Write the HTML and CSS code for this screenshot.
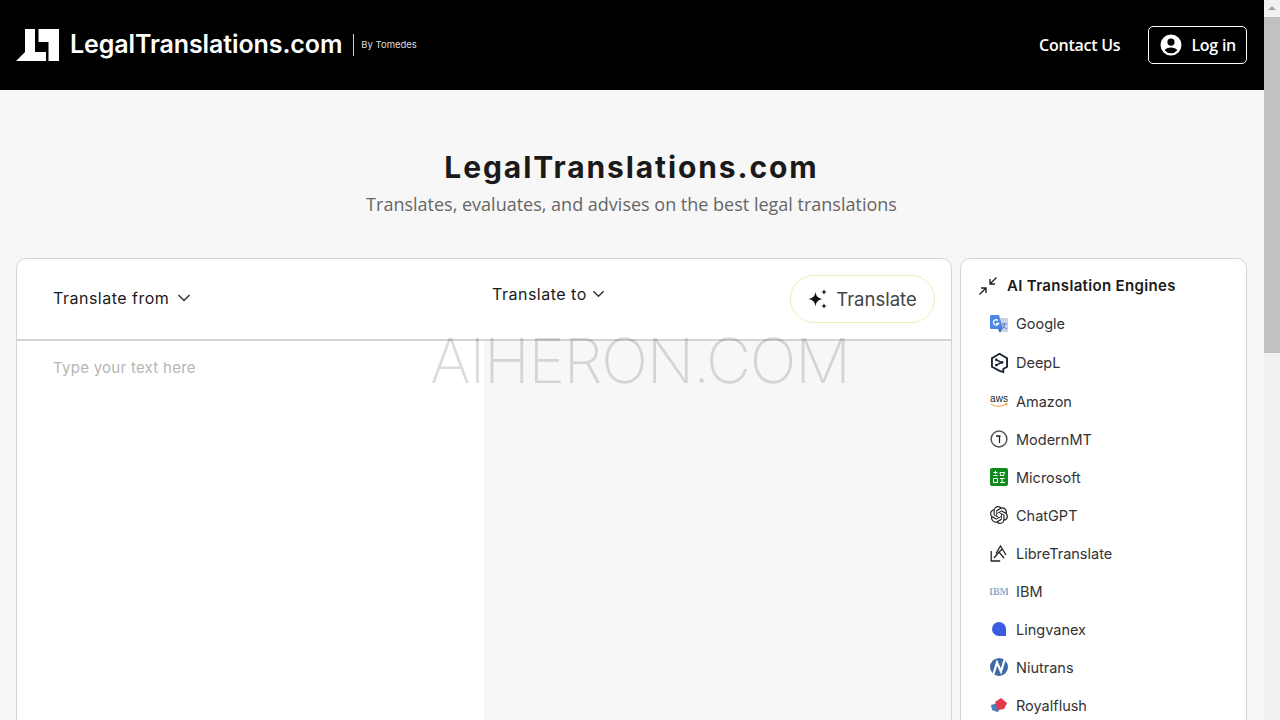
FILE: index.html
```html
<!DOCTYPE html>
<html lang="en">
<head>
    <meta charset="UTF-8">
    <title>LegalTranslations.com</title>
    <link rel="stylesheet" href="styles.css">
</head>
<body>
    <div class="page">
        <header class="topbar">
            <a class="brand">
                <svg class="brand-mark" viewBox="0 0 43 32" width="43" height="32">
                    <path d="M9 0h10v23h11v9H0l9-9z" fill="#fff"/>
                    <path d="M22.500 0H43v32H32.500V13h-10z" fill="#fff"/>
                </svg>
                <span class="brand-name">LegalTranslations.com</span>
                <span class="brand-by">By Tomedes</span>
            </a>
            <nav class="topnav">
                <a class="contact">Contact Us</a>
                <a class="login">
                    <svg viewBox="0 0 24 24" width="24" height="24">
                        <path fill="#fff" d="M12 1.500a10.500 10.500 0 1 0 0 21 10.500 10.500 0 0 0 0-21zm0 4a3.600 3.600 0 1 1 0 7.200 3.600 3.600 0 0 1 0-7.200zm0 14.800a8.300 8.300 0 0 1-6.400-3c.9-1.700 3.800-2.900 6.400-2.900s5.500 1.200 6.400 2.900a8.300 8.300 0 0 1-6.400 3z"/>
                    </svg>
                    Log in
                </a>
            </nav>
        </header>

        <main class="content">
            <div class="hero">
                <h1>LegalTranslations.com</h1>
                <p>Translates, evaluates, and advises on the best legal translations</p>
            </div>

            <div class="workspace">
                <section class="translator">
                    <div class="toolbar">
                        <div class="from">Translate from <svg class="chev" viewBox="0 0 14 8" width="14" height="8"><path d="M1.500 1l5.500 5.500L12.500 1"/></svg></div>
                        <div class="to">Translate to <svg class="chev" viewBox="0 0 14 8" width="13" height="8"><path d="M1.500 1l5.500 5.500L12.500 1"/></svg></div>
                        <button class="translate-btn">
                            <svg viewBox="0 0 20 20" width="20" height="20">
                                <path fill="#111" d="M7.500 3c.8 4.500 2.500 6.200 7.500 7-5 .8-6.700 2.500-7.500 7.500C6.700 12.500 5 10.800 0 10c5-.8 6.700-2.500 7.500-7z"/>
                                <path fill="#111" d="M16 0c.3 2 1.100 2.700 3 3-1.900.3-2.700 1-3 3-.3-2-1.100-2.700-3-3 1.900-.3 2.700-1 3-3zM16 14c.3 2 1.100 2.700 3 3-1.900.3-2.700 1-3 3-.3-2-1.100-2.700-3-3 1.900-.3 2.700-1 3-3z"/>
                            </svg>
                            Translate
                        </button>
                    </div>
                    <div class="panes">
                        <div class="source">Type your text here</div>
                        <div class="target"></div>
                    </div>
                </section>

                <aside class="engines">
                    <h2>
                        <svg viewBox="0 0 20 20" width="20" height="20" class="collapse">
                            <path d="M18.500 1.500L12 8M12 3v5h5M1.500 18.500L8 12M3 12h5v5"/>
                        </svg>
                        AI Translation Engines
                    </h2>
                    <ul>
                        <li>
                            <svg viewBox="0 0 18 18" width="18" height="18">
                                <path fill="#c9d4e6" d="M8 3h9a1 1 0 0 1 1 1v12a1 1 0 0 1-1 1h-6l-3-14z"/>
                                <path fill="#4a87ea" d="M1 0h8l4 14H1a1 1 0 0 1-1-1V1a1 1 0 0 1 1-1z"/>
                                <path fill="#3a66b0" d="M8 14h4l-2 4z"/>
                                <path fill="none" stroke="#fff" stroke-width="1.300" d="M8 5.500a2.700 2.700 0 1 0 .6 3H6"/>
                                <path fill="none" stroke="#5b7fb8" d="M12 9h5M14.500 8v1c0 2-1 4-2.500 5M13 10.500c1 2 2.500 3 4 3.500"/>
                            </svg>
                            Google
                        </li>
                        <li>
                            <svg viewBox="0 0 18 20" width="19" height="21">
                                <path fill="none" stroke="#1b2530" stroke-width="1.800" d="M9 1.200l7.200 4.200v8.200l-3.600 2.100v2.800l-3.600-1-7.200-3.900V5.400z"/>
                                <path fill="none" stroke="#1b2530" stroke-width="1.500" d="M6 7l5 2.500-5 2.500"/>
                                <circle cx="6" cy="7" r="1.300" fill="#1b2530"/><circle cx="11.500" cy="9.500" r="1.300" fill="#1b2530"/><circle cx="6" cy="12" r="1.300" fill="#1b2530"/>
                            </svg>
                            DeepL
                        </li>
                        <li>
                            <svg viewBox="0 0 18 14" width="18" height="14">
                                <text x="9" y="7.500" text-anchor="middle" class="aws">aws</text>
                                <path fill="none" stroke="#ee9a2e" stroke-width="1" d="M1 10c4 3 11 3 15.500 0M15 9.500h2v2"/>
                            </svg>
                            Amazon
                        </li>
                        <li>
                            <svg viewBox="0 0 18 18" width="18" height="18">
                                <circle cx="9" cy="9" r="7.900" fill="none" stroke="#555" stroke-width="1.500"/>
                                <path fill="none" stroke="#222" stroke-width="1.300" d="M6 6h4.500M9.500 6v7"/>
                            </svg>
                            ModernMT
                        </li>
                        <li>
                            <svg viewBox="0 0 18 18" width="18" height="18">
                                <rect width="18" height="18" rx="2" fill="#108a1c"/>
                                <path fill="none" stroke="#fff" d="M3.500 4.500h4M5.500 3v3M3.500 7.500h4M3.500 10.500h4v4h-4zM10 4.500h4.500l-1 3h-3zM10 10.500h4.500M12 10.500v4M10 14.500h5"/>
                            </svg>
                            Microsoft
                        </li>
                        <li>
                            <svg viewBox="0 0 24 24" width="18" height="18">
                                <path fill="#222" d="M22.2819 9.8211a5.9847 5.9847 0 0 0-.5157-4.9108 6.0462 6.0462 0 0 0-6.5098-2.9A6.0651 6.0651 0 0 0 4.9807 4.1818a5.9847 5.9847 0 0 0-3.9977 2.9 6.0462 6.0462 0 0 0 .7427 7.0966 5.98 5.98 0 0 0 .511 4.9107 6.051 6.051 0 0 0 6.5146 2.9001A5.9847 5.9847 0 0 0 13.2599 24a6.0557 6.0557 0 0 0 5.7718-4.2058 5.9894 5.9894 0 0 0 3.9977-2.9001 6.0557 6.0557 0 0 0-.7475-7.0729zm-9.022 12.6081a4.4755 4.4755 0 0 1-2.8764-1.0408l.1419-.0804 4.7783-2.7582a.7948.7948 0 0 0 .3927-.6813v-6.7369l2.02 1.1686a.071.071 0 0 1 .038.052v5.5826a4.504 4.504 0 0 1-4.4945 4.4944zm-9.6607-4.1254a4.4708 4.4708 0 0 1-.5346-3.0137l.142.0852 4.783 2.7582a.7712.7712 0 0 0 .7806 0l5.8428-3.3685v2.3324a.0804.0804 0 0 1-.0332.0615L9.74 19.9502a4.4992 4.4992 0 0 1-6.1408-1.6464zM2.3408 7.8956a4.485 4.485 0 0 1 2.3655-1.9728V11.6a.7664.7664 0 0 0 .3879.6765l5.8144 3.3543-2.0201 1.1685a.0757.0757 0 0 1-.071 0l-4.8303-2.7865A4.504 4.504 0 0 1 2.3408 7.872zm16.5963 3.8558L13.1038 8.364 15.1192 7.2a.0757.0757 0 0 1 .071 0l4.8303 2.7913a4.4944 4.4944 0 0 1-.6765 8.1042v-5.6772a.79.79 0 0 0-.407-.667zm2.0107-3.0231l-.142-.0852-4.7735-2.7818a.7759.7759 0 0 0-.7854 0L9.409 9.2297V6.8974a.0662.0662 0 0 1 .0284-.0615l4.8303-2.7866a4.4992 4.4992 0 0 1 6.6802 4.66zM8.3065 12.863l-2.02-1.1638a.0804.0804 0 0 1-.038-.0567V6.0742a4.4992 4.4992 0 0 1 7.3757-3.4537l-.142.0805L8.704 5.459a.7948.7948 0 0 0-.3927.6813zm1.0976-2.3654l2.602-1.4998 2.6069 1.4998v2.9994l-2.5974 1.4997-2.6067-1.4997Z"/>
                            </svg>
                            ChatGPT
                        </li>
                        <li>
                            <svg viewBox="0 0 18 18" width="18" height="18" class="libre">
                                <path d="M1.200 7v10h9"/>
                                <path d="M4 14l5-6 5 6M6 9.500L10.500 2l5.500 9M9 8l3.500-3"/>
                            </svg>
                            LibreTranslate
                        </li>
                        <li>
                            <svg viewBox="0 0 18 8" width="18" height="8">
                                <text x="9" y="7.500" text-anchor="middle" class="ibm">IBM</text>
                                <path stroke="#fff" stroke-width=".5" fill="none" d="M0 2h18M0 4h18M0 6h18"/>
                            </svg>
                            IBM
                        </li>
                        <li>
                            <svg viewBox="0 0 18 18" width="18" height="18">
                                <path fill="#3b5be0" d="M9 2a7 7 0 1 0 0 14h7V9a7 7 0 0 0-7-7z"/>
                            </svg>
                            Lingvanex
                        </li>
                        <li>
                            <svg viewBox="0 0 18 18" width="18" height="18">
                                <circle cx="9" cy="9" r="9" fill="#3e6aa8"/>
                                <path fill="none" stroke="#fff" stroke-width="2.200" d="M3.500 16L7 4.500 11 13.500 14.500 2"/>
                            </svg>
                            Niutrans
                        </li>
                        <li>
                            <svg viewBox="0 0 18 18" width="18" height="18">
                                <path fill="#4a7fb5" d="M1 9l7-2 1 8-2 1-5-2z"/>
                                <path fill="#e23a48" d="M5 6l6-4 6 5-3 6-6 1z"/>
                            </svg>
                            Royalflush
                        </li>
                    </ul>
                </aside>
            </div>
        </main>
        <div class="watermark">AIHERON.COM</div>
    </div>
    <div class="scrollbar">
        <div class="scroll-btn"></div>
        <div class="scroll-thumb"></div>
    </div>
</body>
</html>
```
FILE: styles.css
```css
html, body {
    margin: 0;
    height: 720px;
    overflow: hidden;
}

body {
    display: flex;
    background: #f7f7f7;
    font-family: 'Inter', 'Liberation Sans', sans-serif;
    color: #1a1a1a;
}

.page {
    flex: 1;
    min-width: 0;
    position: relative;
}

.topbar {
    height: 90px;
    background: #000;
    display: flex;
    align-items: center;
    justify-content: space-between;
    padding: 0 17px 0 16px;
}

.brand {
    display: flex;
    align-items: center;
    color: #fff;
}

.brand-mark {
    margin-right: 11px;
}

.brand-name {
    font-size: 25px;
    font-weight: 600;
    letter-spacing: -0.1px;
    margin-right: 11px;
    padding-bottom: 3px;
}

.brand-by {
    border-left: 1px solid #ccc;
    padding: 4px 0 4px 7px;
    font-size: 9.500px;
    line-height: 14px;
    color: #ddd;
}

.topnav {
    display: flex;
    align-items: center;
    gap: 28px;
    font-family: 'Open Sans', sans-serif;
    font-size: 16px;
    font-weight: 600;
    letter-spacing: -0.25px;
    color: #fff;
}

.login {
    display: flex;
    align-items: center;
    gap: 8px;
    height: 36px;
    padding: 0 10px;
    border: 1px solid #fff;
    border-radius: 5px;
}

.content {
    padding: 0 17px 0 16px;
}

.hero {
    height: 168px;
    padding-top: 58px;
    box-sizing: border-box;
    text-align: center;
}

.hero h1 {
    margin: 0;
    font-size: 30px;
    line-height: 38px;
    font-weight: 700;
    letter-spacing: 1.900px;
    color: #1a1a1a;
}

.hero p {
    margin: 5px 0 0;
    font-family: 'Open Sans', sans-serif;
    font-size: 18px;
    line-height: 26px;
    color: #666;
}

.workspace {
    display: flex;
    gap: 8px;
    align-items: flex-start;
}

.translator {
    flex: 1;
    min-width: 0;
    height: 480px;
    background: #fff;
    border: 1px solid #d4d4d4;
    border-radius: 10px 10px 0 0;
    overflow: hidden;
}

.toolbar {
    height: 80px;
    display: grid;
    grid-template-columns: 1fr 1fr;
    position: relative;
    border-bottom: 2px solid #d4d4d4;
    font-size: 16px;
    letter-spacing: 0.5px;
    color: #1a1a1a;
}

.from, .to {
    display: flex;
    align-items: center;
}

.from {
    gap: 8px;
    padding: 0 0 2px 36px;
}

.to {
    gap: 5px;
    padding: 0 0 10px 8px;
}

.chev {
    fill: none;
    stroke: #333;
    stroke-width: 1.500;
}

.translate-btn {
    position: absolute;
    top: 16px;
    right: 16px;
    width: 145px;
    height: 48px;
    display: flex;
    align-items: center;
    justify-content: center;
    gap: 8px;
    background: #fff;
    border: 1px solid #eef0b8;
    border-radius: 24px;
    font-family: inherit;
    font-size: 18.500px;
    letter-spacing: 0;
    color: #444;
}

.panes {
    display: grid;
    grid-template-columns: 1fr 1fr;
    height: 400px;
}

.source {
    padding: 17px 36px;
    font-size: 15px;
    line-height: 20px;
    letter-spacing: 0.270px;
    color: #b5b5b5;
}

.target {
    background: #f7f7f7;
}

.engines {
    width: 285px;
    height: 480px;
    flex: none;
    background: #fff;
    border: 1px solid #d4d4d4;
    border-radius: 10px 10px 0 0;
    overflow: hidden;
}

.engines h2 {
    display: flex;
    align-items: center;
    gap: 9px;
    margin: 17px 0 0 17px;
    font-size: 15px;
    line-height: 20px;
    font-weight: 600;
    letter-spacing: 0.330px;
    color: #1a1a1a;
}

.collapse {
    fill: none;
    stroke: #222;
    stroke-width: 1.400;
}

.engines ul {
    list-style: none;
    margin: 8px 0 0;
    padding: 0 0 0 27px;
}

.engines li {
    height: 38px;
    display: flex;
    align-items: center;
    font-size: 14.500px;
    color: #333;
    position: relative;
    padding-left: 28px;
}

.engines li:nth-child(-n+2) {
    height: 39px;
}

.engines li svg {
    position: absolute;
    left: 2px;
    top: 50%;
    transform: translateY(-50%);
}

.aws {
    font-family: 'Liberation Sans', sans-serif;
    font-size: 10px;
    fill: #222;
}

.ibm {
    font-family: 'Liberation Serif', serif;
    font-size: 10px;
    font-weight: 700;
    fill: #6f9abd;
}

.libre path {
    fill: none;
    stroke: #222;
    stroke-width: 1.300;
}

.watermark {
    position: absolute;
    left: 430px;
    top: 326px;
    font-size: 62px;
    line-height: 70px;
    font-weight: 200;
    letter-spacing: -1.250px;
    color: rgba(0, 0, 0, 0.14);
    white-space: nowrap;
    pointer-events: none;
}

.scrollbar {
    width: 16px;
    flex: none;
    background: #f1f1f1;
}

.scroll-btn {
    height: 17px;
    position: relative;
}

.scroll-btn::after {
    content: "";
    position: absolute;
    left: 4px;
    top: 6px;
    border: 4px solid transparent;
    border-top: 0;
    border-bottom: 4px solid #a3a3a3;
}

.scroll-thumb {
    height: 336px;
    background: #c1c1c1;
}
```
